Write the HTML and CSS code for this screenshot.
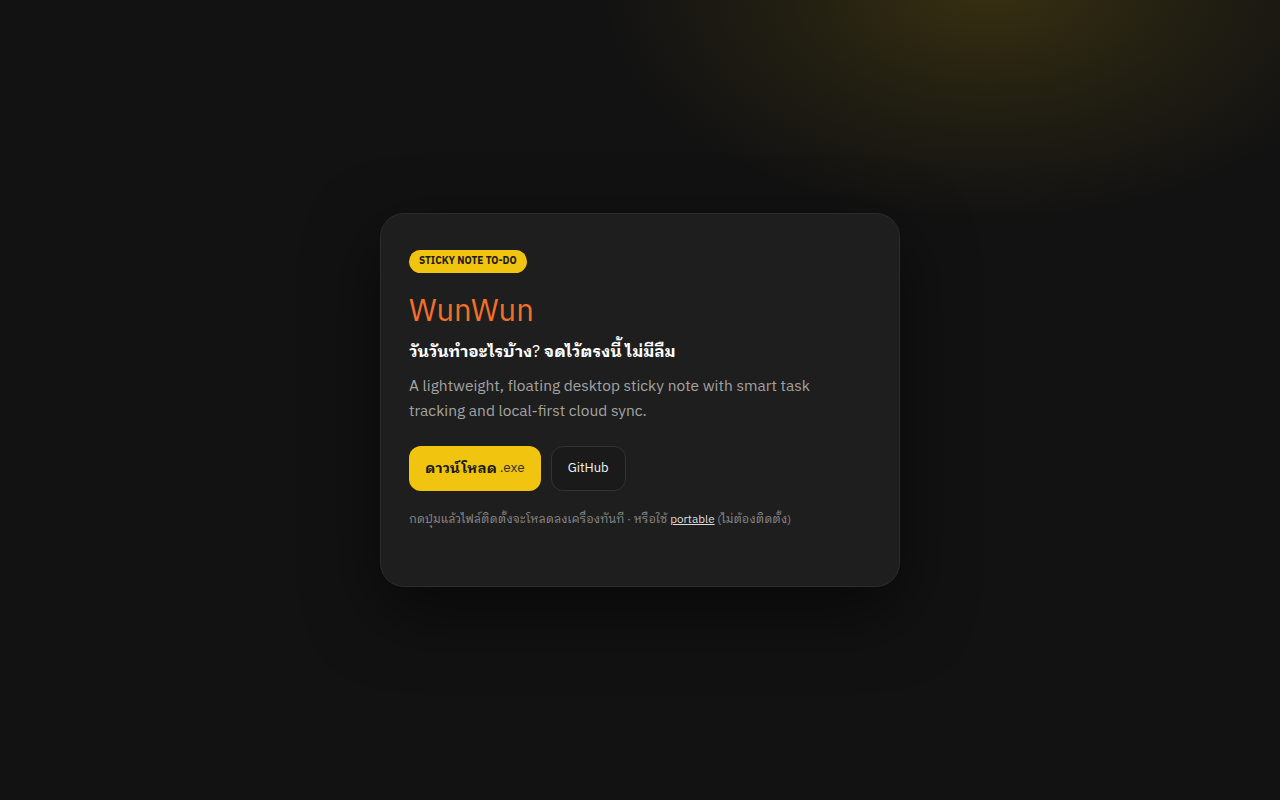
FILE: index.html
```html
<!DOCTYPE html>
<html lang="th">
<head>
<meta charset="utf-8">
<title>WunWun</title>
<link rel="stylesheet" href="styles.css">
</head>
<body>
<main class="page">
  <section class="card">
    <span class="badge">STICKY NOTE TO-DO</span>
    <h1 class="title">WunWun</h1>
    <p class="tagline"><strong>วันวันทำอะไรบ้าง</strong>? <strong>จดไว้ตรงนี้ ไม่มีลืม</strong></p>
    <p class="desc">A lightweight, floating desktop sticky note with smart task tracking and local-first cloud sync.</p>
    <div class="actions">
      <a class="btn btn-primary" href="#"><b>ดาวน์โหลด</b> <span class="ext">.exe</span></a>
      <a class="btn btn-ghost" href="#">GitHub</a>
    </div>
    <p class="note">กดปุ่มแล้วไฟล์ติดตั้งจะโหลดลงเครื่องทันที · หรือใช้ <a href="#">portable</a> (ไม่ต้องติดตั้ง)</p>
  </section>
</main>
</body>
</html>
```
FILE: styles.css
```css
* { box-sizing: border-box; }
html, body { margin: 0; height: 100%; }
body {
  background:
    radial-gradient(ellipse 390px 235px at 990px -15px, rgba(241, 196, 15, 0.17), rgba(241, 196, 15, 0.065) 55%, rgba(241, 196, 15, 0) 100%),
    #121212;
  font-family: "IBM Plex Sans Thai Looped", "IBM Plex Sans", "Loma", sans-serif;
  color: #f2f2f2;
  overflow: hidden;
}
.page {
  height: 100%;
  display: flex;
  align-items: center;
  justify-content: center;
  padding-bottom: 1px;
}
.card {
  width: 520px;
  height: 374px;
  background: #1e1e1e;
  border: 1px solid #2c2c2c;
  border-radius: 24px;
  padding: 36px 28px 0;
  box-shadow: 0 24px 70px rgba(0, 0, 0, 0.55);
  display: flex;
  flex-direction: column;
  align-items: flex-start;
}
.badge {
  display: inline-flex;
  align-items: center;
  background: #f1c40f;
  color: #1a1a1a;
  font-size: 10px;
  font-weight: 700;
  height: 23px;
  padding: 0 10px;
  border-radius: 999px;
}
.title {
  margin: 19px 0 0;
  font-size: 31px;
  font-weight: 400;
  line-height: 40px;
  color: #f2702b;
}
.tagline {
  margin: 9px 0 0;
  font-size: 16px;
  line-height: 24px;
  color: #ffffff;
  font-weight: 400;
}
.tagline strong { font-weight: 700; }
.desc {
  margin: 9px 0 0;
  font-size: 15.5px;
  line-height: 25px;
  color: #a3a3a3;
  max-width: 420px;
}
.actions {
  display: flex;
  gap: 10px;
  margin-top: 22px;
}
.btn {
  display: inline-flex;
  align-items: center;
  height: 45px;
  border-radius: 12px;
  text-decoration: none;
}
.btn-primary {
  background: #f1c40f;
  color: #1a1a1a;
  padding: 0 16px;
  font-size: 14px;
}
.btn-primary b { font-weight: 700; }
.btn-primary .ext { font-size: 13.5px; margin-left: 3px; color: #333333; }
.btn-ghost {
  background: #1a1a1a;
  border: 1px solid #333333;
  color: #f2f2f2;
  padding: 0 16px;
  font-size: 13px;
}
.note {
  margin: 20px 0 0;
  font-size: 11.7px;
  line-height: 18px;
  color: #8c8c8c;
}
.note a { color: #dddddd; text-decoration: underline; }
```
